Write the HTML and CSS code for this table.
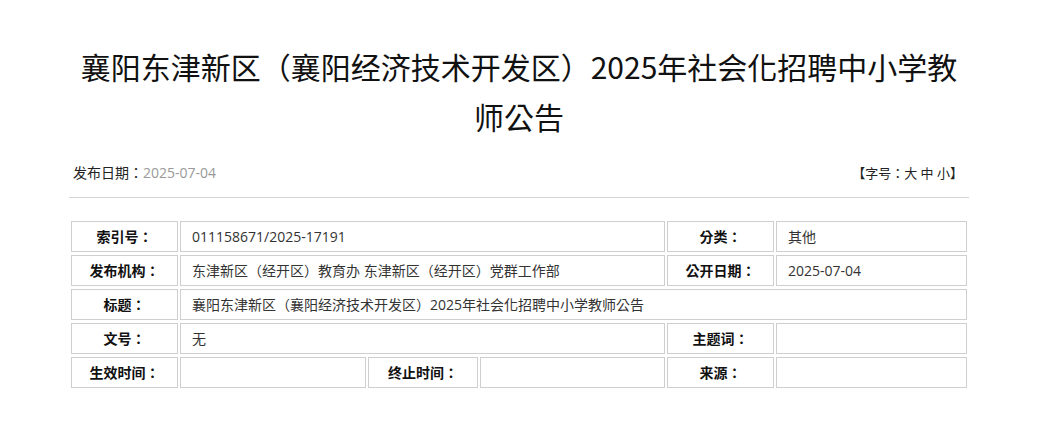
FILE: index.html
```html
<!DOCTYPE html>
<html lang="zh-CN">
<head>
<meta charset="utf-8">
<title>公告</title>
<link rel="stylesheet" href="styles.css">
</head>
<body>
<div class="page">
  <h1 class="title">襄阳东津新区（襄阳经济技术开发区）2025年社会化招聘中小学教师公告</h1>
  <div class="meta">
    <div class="date">发布日期：<span class="date-val">2025-07-04</span></div>
    <div class="fontsize">【字号：大 中 小】</div>
  </div>
  <div class="info">
    <div class="cell label">索引号：</div>
    <div class="cell value span3">011158671/2025-17191</div>
    <div class="cell label">分类：</div>
    <div class="cell value">其他</div>

    <div class="cell label">发布机构：</div>
    <div class="cell value span3">东津新区（经开区）教育办 东津新区（经开区）党群工作部</div>
    <div class="cell label">公开日期：</div>
    <div class="cell value">2025-07-04</div>

    <div class="cell label">标题：</div>
    <div class="cell value span5">襄阳东津新区（襄阳经济技术开发区）2025年社会化招聘中小学教师公告</div>

    <div class="cell label">文号：</div>
    <div class="cell value span3">无</div>
    <div class="cell label">主题词：</div>
    <div class="cell value"></div>

    <div class="cell label">生效时间：</div>
    <div class="cell value"></div>
    <div class="cell label">终止时间：</div>
    <div class="cell value"></div>
    <div class="cell label">来源：</div>
    <div class="cell value"></div>
  </div>
</div>
</body>
</html>
```

FILE: styles.css
```css
html, body {
  margin: 0;
  padding: 0;
  background: #fff;
}
body {
  font-family: "Open Sans", "Noto Sans CJK TC", "Noto Sans CJK SC", sans-serif;
  color: #222;
  text-spacing-trim: space-all;
  font-feature-settings: "locl" 0;
}
.page {
  width: 900px;
  margin: 0 0 0 69px;
}
.title {
  margin: 41px 0 0;
  font-family: "Noto Sans CJK TC", "Noto Sans CJK SC", sans-serif;
  font-size: 30px;
  line-height: 50px;
  font-weight: normal;
  text-align: center;
  color: #111;
}
.meta {
  display: flex;
  justify-content: space-between;
  align-items: center;
  margin-top: 20px;
  padding: 0 6px 12px 4px;
  height: 24px;
  border-bottom: 1px solid #d4d4d4;
}
.date {
  font-size: 14px;
  line-height: 24px;
  color: #222;
}
.date-val {
  color: #999;
}
.fontsize {
  font-size: 13px;
  line-height: 24px;
  color: #222;
}
.info {
  display: grid;
  grid-template-columns: 107px 186px 110px 185px 107px 191px;
  grid-auto-rows: 31px;
  column-gap: 2px;
  row-gap: 3px;
  margin: 23px 2px 0;
}
.cell {
  box-sizing: border-box;
  border: 1px solid #cfcfcf;
  display: flex;
  align-items: center;
  font-size: 14px;
  line-height: 20px;
  white-space: nowrap;
  overflow: hidden;
}
.label {
  justify-content: center;
  font-weight: bold;
  color: #111;
}
.value {
  padding-left: 11px;
  color: #333;
}
.span3 {
  grid-column: span 3;
}
.span5 {
  grid-column: span 5;
}
```
